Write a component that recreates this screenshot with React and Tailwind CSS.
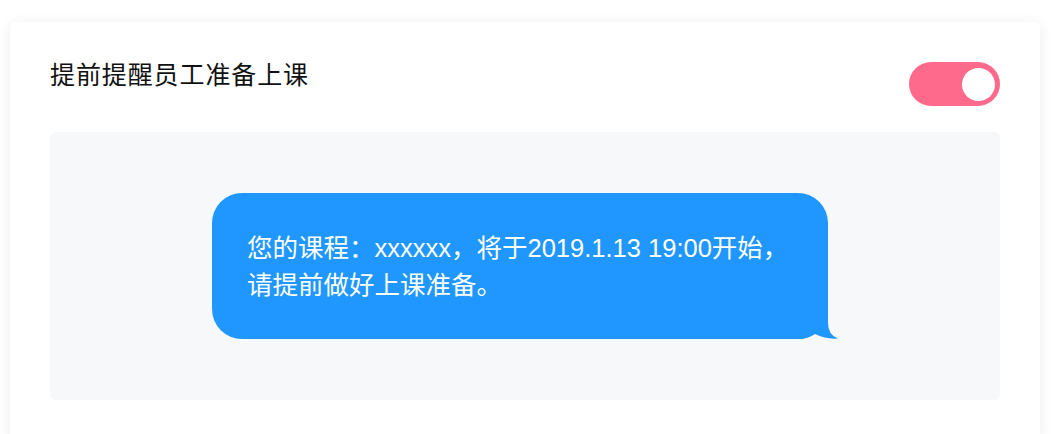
import React, { useState } from 'react';

const Toggle = ({ on, onChange }) => (
  <button
    type="button"
    onClick={() => onChange(!on)}
    className={`mt-[5px] flex h-[44px] w-[91px] shrink-0 items-center rounded-full px-[5px] ${on ? 'justify-end bg-[#fe6a8c]' : 'justify-start bg-[#d9d9de]'}`}
  >
    <span className="block h-[33px] w-[33px] rounded-full bg-white" />
  </button>
);

const Bubble = ({ children }) => (
  <div className="relative w-[616px] whitespace-nowrap rounded-[30px] bg-[#1f97fe] pl-[35px] pt-[37px] pb-[35px] text-[25.5px] leading-[37px] text-white">
    {children}
    <svg className="absolute -right-[10px] bottom-0" width="42" height="38" viewBox="0 0 42 38">
      <path d="M0 0 L32 0 L32 22 Q32 34 42 37.5 Q30 38.5 19 33 Q12 37.5 4 38 L0 38 Z" fill="#1f97fe" />
    </svg>
  </div>
);

export default function App() {
  const [enabled, setEnabled] = useState(true);

  return (
    <div
      className="min-h-[434px] bg-white pt-[22px] pl-[10px]"
      style={{ fontFamily: '"Liberation Sans", "Noto Sans CJK SC", sans-serif' }}
    >
      <div className="w-[1030px] rounded-[6px] bg-white px-[40px] pt-[35px] pb-[40px] shadow-[0_2px_14px_rgba(0,0,0,0.08)]">
        <div className="flex items-start justify-between">
          <h2 className="text-[25px] leading-[37px] tracking-[0.9px] text-[#111]">提前提醒员工准备上课</h2>
          <Toggle on={enabled} onChange={setEnabled} />
        </div>

        <div className="mt-[26px] flex h-[268px] items-center justify-center rounded-[6px] bg-[#f7f8fa] pr-[10px]">
          <Bubble>
            您的课程：xxxxxx，将于2019.1.13 19:00开始，
            <br />
            请提前做好上课准备。
          </Bubble>
        </div>
      </div>
    </div>
  );
}
